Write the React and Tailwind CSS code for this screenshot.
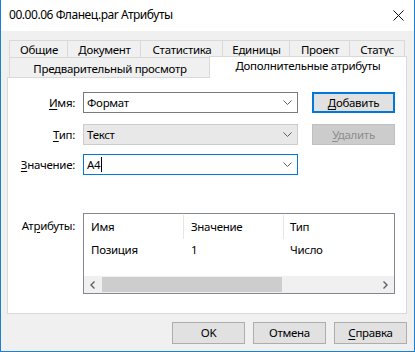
import React from "react";

const Chevron = ({ color = "#5f5f5f" }) => (
  <svg width="9" height="5" viewBox="0 0 9 5" className="shrink-0">
    <polyline points="0.5,0.5 4.5,4.5 8.5,0.5" fill="none" stroke={color} strokeWidth="1" />
  </svg>
);

const Combo = ({ value, border, bg, caret }) => (
  <div className={`w-[215px] h-[21px] border ${border} ${bg} flex items-center justify-between pl-[3px] pr-[5px]`}>
    <div className="flex items-center">
      <span>{value}</span>
      {caret && <span className="w-px h-[15px] bg-black ml-px" />}
    </div>
    <Chevron />
  </div>
);

export default function App() {
  return (
    <div
      className="w-[415px] h-[352px] flex flex-col border-x border-b border-[#1c7fd6] text-[11.5px] tracking-[-0.3px] text-black leading-none overflow-hidden"
      style={{ fontFamily: '"Noto Sans", sans-serif' }}
    >
      {/* title bar */}
      <div className="h-[31px] bg-white flex items-center justify-between pl-[8px] pr-[10px] shrink-0">
        <span className="pb-[2px] text-[12px] tracking-[-0.45px]">00.00.06 Фланец.par Атрибуты</span>
        <svg width="11" height="11" viewBox="0 0 11 11" className="mb-[1px]">
          <line x1="0.5" y1="0.5" x2="10.5" y2="10.5" stroke="#111" strokeWidth="1" />
          <line x1="10.5" y1="0.5" x2="0.5" y2="10.5" stroke="#111" strokeWidth="1" />
        </svg>
      </div>

      {/* body */}
      <div className="flex-1 bg-[#f0f0f0] pt-[9px] pl-[6px] pr-[7px] flex flex-col">
        {/* tabs */}
        <div className="pl-[2px] flex flex-col">
          <div className="flex h-[17px]">
            <div className="w-[59px] border-l border-t border-[#d9d9d9] flex items-center justify-center pt-[2px]">Общие</div>
            <div className="w-[74px] -ml-px border-l border-t border-[#d9d9d9] flex items-center justify-center pt-[2px]">Документ</div>
            <div className="w-[83px] -ml-px border-l border-t border-[#d9d9d9] flex items-center justify-center pt-[2px]">Статистика</div>
            <div className="w-[68px] -ml-px border-l border-t border-[#d9d9d9] flex items-center justify-center pt-[2px]">Единицы</div>
            <div className="w-[61px] -ml-px border-l border-t border-[#d9d9d9] flex items-center justify-center pt-[2px]">Проект</div>
            <div className="w-[56px] -ml-px border-x border-t border-[#d9d9d9] flex items-center justify-center pt-[2px]">Статус</div>
          </div>
          <div className="flex h-[20px] items-start">
            <div className="w-[201px] h-[20px] border-l border-t border-[#d9d9d9] flex items-center justify-center pt-[2px]">
              Предварительный просмотр
            </div>
            <div className="relative z-10 w-[198px] h-[22px] -mt-px -ml-px bg-white border-x border-t border-[#d9d9d9] flex items-center justify-center pb-[3px]">
              Дополнительные атрибуты
            </div>
          </div>
        </div>

        {/* panel */}
        <div className="h-[237px] shrink-0 border border-[#d9d9d9] bg-white pt-[14px] flex flex-col">
          {/* Имя */}
          <div className="flex items-center h-[21px]">
            <div className="w-[68px] text-right pr-[1px]"><span className="underline underline-offset-2">И</span>мя:</div>
            <div className="ml-[7px]">
              <Combo value="Формат" border="border-[#7a7a7a]" bg="bg-white" />
            </div>
            <div className="ml-[14px] w-[83px] h-[21px] border-2 border-[#0078d7] bg-[#e1e1e1] flex items-center justify-center">
              <span><span className="underline underline-offset-2">Д</span>обавить</span>
            </div>
          </div>
          {/* Тип */}
          <div className="flex items-center h-[21px] mt-[11px]">
            <div className="w-[68px] text-right pr-[1px]"><span className="underline underline-offset-2">Т</span>ип:</div>
            <div className="ml-[7px]">
              <Combo value="Текст" border="border-[#cccccc]" bg="bg-[#e8e8e8]" />
            </div>
            <div className="ml-[14px] w-[83px] h-[21px] border border-[#bfbfbf] bg-[#cccccc] text-[#8d8d8d] flex items-center justify-center">
              <span><span className="underline underline-offset-2">У</span>далить</span>
            </div>
          </div>
          {/* Значение */}
          <div className="flex items-center h-[21px] mt-[9px]">
            <div className="w-[68px] text-right pr-[1px]"><span className="underline underline-offset-2">З</span>начение:</div>
            <div className="ml-[7px]">
              <Combo value="A4" border="border-[#0078d7]" bg="bg-white" caret />
            </div>
          </div>

          {/* Атрибуты */}
          <div className="flex items-start mt-[38px]">
            <div className="w-[68px] text-right pr-[1px] pt-[7px]">Ат<span className="underline underline-offset-2">р</span>ибуты:</div>
            <div className="ml-[7px] w-[312px] h-[81px] border border-[#828790] bg-white flex flex-col">
              <div className="flex h-[25px] items-stretch pt-px">
                <div className="w-[100px] pl-[7px] flex items-center border-r border-[#e5e5e5]">Имя</div>
                <div className="w-[100px] pl-[7px] flex items-center border-r border-[#e5e5e5]">Значение</div>
                <div className="flex-1 pl-[6px] flex items-center">Тип</div>
              </div>
              <div className="flex h-[21px] items-center">
                <div className="w-[100px] pl-[7px]">Позиция</div>
                <div className="w-[100px] pl-[7px]">1</div>
                <div className="flex-1 pl-[6px]">Число</div>
              </div>
              <div className="flex-1" />
              <div className="h-[17px] bg-[#f0f0f0] flex items-center">
                <div className="w-[17px] h-[17px] flex items-center justify-center">
                  <svg width="5" height="8" viewBox="0 0 5 8">
                    <polyline points="4.5,0.5 1,4 4.5,7.5" fill="none" stroke="#606060" strokeWidth="1.4" />
                  </svg>
                </div>
                <div className="ml-px w-[180px] h-[15px] bg-[#cdcdcd]" />
                <div className="flex-1" />
                <div className="w-[17px] h-[17px] flex items-center justify-center">
                  <svg width="5" height="8" viewBox="0 0 5 8">
                    <polyline points="0.5,0.5 4,4 0.5,7.5" fill="none" stroke="#606060" strokeWidth="1.4" />
                  </svg>
                </div>
              </div>
            </div>
          </div>
        </div>

        {/* bottom buttons */}
        <div className="flex justify-end gap-[8px] mt-[8px]">
          <div className="w-[73px] h-[22px] border border-[#adadad] bg-[#e1e1e1] flex items-center justify-center">OK</div>
          <div className="w-[73px] h-[22px] border border-[#adadad] bg-[#e1e1e1] flex items-center justify-center">Отмена</div>
          <div className="w-[73px] h-[22px] border border-[#adadad] bg-[#e1e1e1] flex items-center justify-center">
            <span><span className="underline underline-offset-2">С</span>правка</span>
          </div>
        </div>
      </div>
    </div>
  );
}
